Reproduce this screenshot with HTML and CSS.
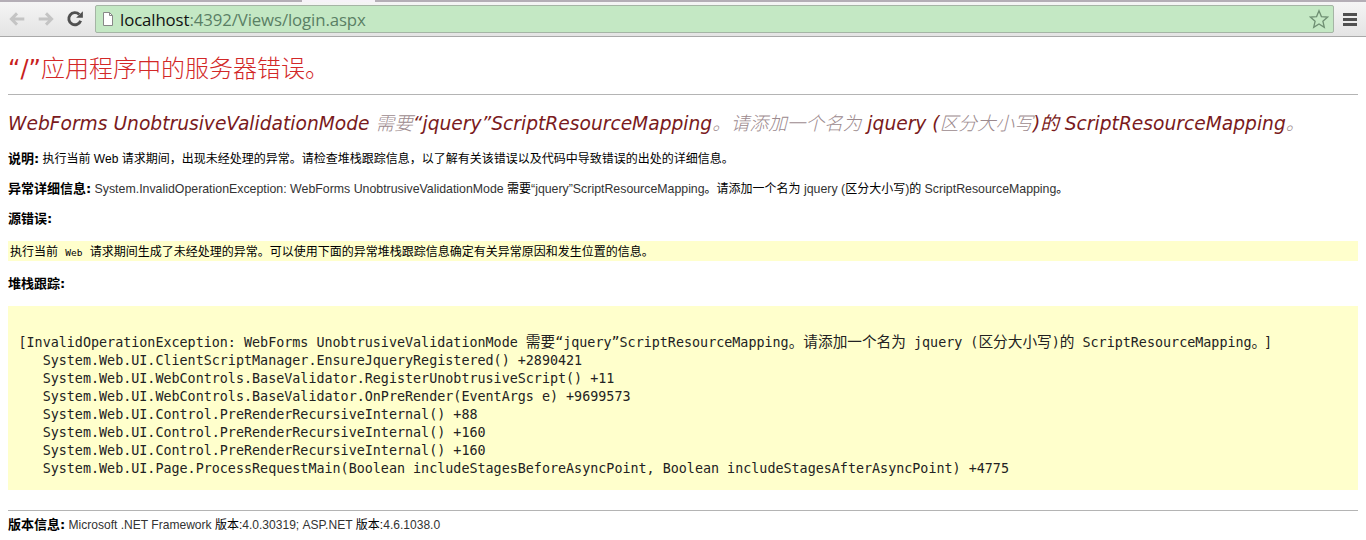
FILE: index.html
```html
<!DOCTYPE html>
<html lang="zh-CN">
<head>
<meta charset="utf-8">
<title>login.aspx</title>
<link rel="stylesheet" href="styles.css">
</head>
<body>
<header class="toolbar">
  <span class="active-tab"></span>
  <nav class="nav-buttons">
    <svg class="nav-icon" viewBox="0 0 16 16"><path d="M14.5 8H3.5M8 3 3 8l5 5" fill="none" stroke="#c4c4c4" stroke-width="2.6"/></svg>
    <svg class="nav-icon" viewBox="0 0 16 16"><path d="M1.5 8h11M8 3l5 5-5 5" fill="none" stroke="#c4c4c4" stroke-width="2.6"/></svg>
    <svg class="nav-icon" viewBox="0 0 16 16"><path d="M13 9.5A5.4 5.4 0 1 1 11.8 4" fill="none" stroke="#505050" stroke-width="2.6"/><path d="M9 6.8h6V1z" fill="#505050"/></svg>
  </nav>
  <div class="omnibox">
    <svg class="page-icon" viewBox="0 0 12 14"><path d="M1.5.5h6l3 3v10h-9z" fill="#fff" stroke="#888"/><path d="M7.5.5v3h3" fill="none" stroke="#888"/></svg>
    <span class="url"><span class="host">localhost</span>:4392/Views/login.aspx</span>
    <svg class="star" viewBox="0 0 20 20"><path d="M10 1.8 12.4 7.6l6.2.5-4.7 4.1 1.4 6.1L10 15l-5.3 3.3 1.4-6.1-4.7-4.1 6.2-.5z" fill="none" stroke="#6f8f73" stroke-width="1.3"/></svg>
  </div>
  <div class="menu"><span></span><span></span><span></span></div>
</header>
<main class="page">
  <h1 class="app-title"><span class="title-mark">“/”</span>应用程序中的服务器错误。</h1>
  <hr class="rule">
  <h2 class="err-title">WebForms UnobtrusiveValidationMode <span class="pale">需要</span>“jquery”ScriptResourceMapping<span class="pale">。请添加一个名为</span> jquery (<span class="pale">区分大小写</span>)的 ScriptResourceMapping<span class="pale">。</span></h2>
  <p class="info"><b class="label">说明:</b> 执行当前 Web 请求期间，出现未经处理的异常。请检查堆栈跟踪信息，以了解有关该错误以及代码中导致错误的出处的详细信息。</p>
  <p class="info"><b class="label">异常详细信息:</b> <span class="latin">System.InvalidOperationException: WebForms UnobtrusiveValidationMode</span> 需要<span class="latin">“jquery”ScriptResourceMapping</span>。请添加一个名为 <span class="latin">jquery (</span>区分大小写<span class="latin">)</span>的 <span class="latin">ScriptResourceMapping</span>。</p>
  <p class="info"><b class="label">源错误:</b></p>
  <div class="note"><code class="note-text">执行当前 <span class="note-latin">Web</span> 请求期间生成了未经处理的异常。可以使用下面的异常堆栈跟踪信息确定有关异常原因和发生位置的信息。</code></div>
  <p class="info"><b class="label">堆栈跟踪:</b></p>
  <pre class="trace"><span class="trace-head">[InvalidOperationException: WebForms UnobtrusiveValidationMode <span class="trace-cjk">需要</span>“jquery”ScriptResourceMapping<span class="trace-cjk">。请添加一个名为</span> jquery (<span class="trace-cjk">区分大小写</span>)<span class="trace-cjk">的</span> ScriptResourceMapping<span class="trace-cjk trace-tail">。</span>]</span><span class="trace-body">   System.Web.UI.ClientScriptManager.EnsureJqueryRegistered() +2890421
   System.Web.UI.WebControls.BaseValidator.RegisterUnobtrusiveScript() +11
   System.Web.UI.WebControls.BaseValidator.OnPreRender(EventArgs e) +9699573
   System.Web.UI.Control.PreRenderRecursiveInternal() +88
   System.Web.UI.Control.PreRenderRecursiveInternal() +160
   System.Web.UI.Control.PreRenderRecursiveInternal() +160
   System.Web.UI.Page.ProcessRequestMain(Boolean includeStagesBeforeAsyncPoint, Boolean includeStagesAfterAsyncPoint) +4775</span></pre>
  <hr class="rule footer-rule">
  <p class="info version"><b class="label">版本信息:</b> <span class="latin">Microsoft .NET Framework</span> 版本:<span class="latin">4.0.30319; ASP.NET</span> 版本:<span class="latin">4.6.1038.0</span></p>
</main>
</body>
</html>
```
FILE: styles.css
```css
* { box-sizing: border-box; }
html, body { margin: 0; padding: 0; background: #fff; overflow: hidden; }
body { height: 540px; font-family: "Liberation Sans", "Noto Sans CJK SC", sans-serif; color: #000; }

.toolbar {
  position: relative;
  display: flex; align-items: center; height: 37px;
  padding: 3px 9px 3px 8px; gap: 11px;
  background: linear-gradient(#f5f5f5, #e4e4e4);
  border-top: 2px solid #b4aeb6; border-bottom: 1px solid #a9a9a9;
}
.active-tab { position: absolute; left: 302px; top: -2px; width: 73px; height: 2px; background: #f6f2f8; }
.nav-buttons { display: flex; gap: 11px; align-items: center; }
.nav-icon { width: 18px; height: 18px; display: block; }
.omnibox {
  flex: 1; height: 28px; display: flex; align-items: center; padding: 0 4px 0 6px; gap: 6px;
  background: #c4e8c4; border: 1px solid #a5b5a5; border-radius: 2px;
}
.page-icon { width: 12px; height: 14px; }
.url { flex: 1; font: 16.8px "Open Sans", sans-serif; color: #5a7f64; letter-spacing: -.1px; }
.host { color: #111; }
.star { width: 20px; height: 20px; }
.menu { width: 14px; display: flex; flex-direction: column; gap: 2px; margin-left: -2px; }
.menu span { height: 3px; background: #505050; }

.page { padding: 0 8px; }
.app-title { margin: 0; padding-top: 17px; height: 57px; font: 300 24px/30px "DejaVu Sans", "Noto Sans CJK SC", sans-serif; color: #d22828; }
.title-mark { font-weight: 400; color: #c81e1e; }
.rule { margin: 0; height: 1px; border: 0; background: #b4b4b4; }
.err-title { margin: 0; padding-top: 16px; height: 56px; font: italic 400 18.66px/26px "DejaVu Sans", "Noto Sans CJK SC", sans-serif; color: #7a1a20; white-space: nowrap; }
.pale { color: #9c8a8e; font-weight: 300; }
.info { margin: 0 0 14px; font-size: 12px; line-height: 16px; white-space: nowrap; }
.label { font-family: "DejaVu Sans", "Noto Sans CJK SC", sans-serif; font-size: 13px; }
.latin { font-size: 12.35px; color: #333; }
.version .latin { font-size: 12.05px; }
.note { height: 20px; margin: 8px 0 15px; padding: 0 2px; background: #ffffcc; line-height: 20px; }
.note-text { font: 12px/20px "DejaVu Sans Mono", "Noto Sans CJK SC", monospace; }
.note-latin { font-size: 9.5px; }
.trace { margin: 14px 0 20px; height: 184px; padding: 27px 10px 0 10.5px; background: #ffffcc; font: 13.38px/18px "DejaVu Sans Mono", "Noto Sans CJK SC", monospace; color: #222; }
.trace-head, .trace-body { display: block; }
.trace-cjk { font-size: 14.67px; }
.trace-tail { padding-right: 5px; }
.footer-rule { margin-bottom: 6px; }
.version { margin: 0; }
```
